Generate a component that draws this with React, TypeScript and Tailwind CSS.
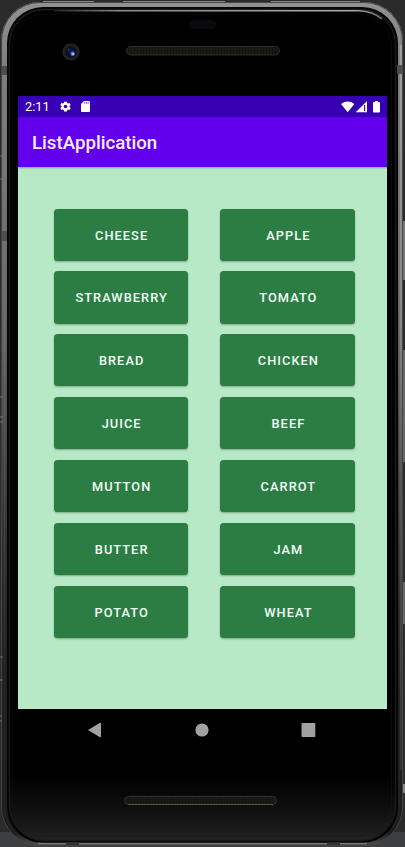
const items = [
  'CHEESE', 'APPLE', 'STRAWBERRY', 'TOMATO', 'BREAD', 'CHICKEN', 'JUICE',
  'BEEF', 'MUTTON', 'CARROT', 'BUTTER', 'JAM', 'POTATO', 'WHEAT',
];

function PhoneFrame() {
  return (
    <svg className="absolute inset-0" width="405" height="847" viewBox="0 0 405 847" aria-hidden="true">
      <defs>
        <linearGradient id="metal" x1="0" y1="0" x2="0" y2="1">
          <stop offset="0" stopColor="#929292" />
          <stop offset="0.08" stopColor="#7c7c7c" />
          <stop offset="0.38" stopColor="#676665" />
          <stop offset="0.5" stopColor="#4c4c4c" />
          <stop offset="0.63" stopColor="#333" />
          <stop offset="0.78" stopColor="#212121" />
          <stop offset="0.985" stopColor="#1d1d1d" />
          <stop offset="1" stopColor="#505050" />
        </linearGradient>
        <linearGradient id="metalRight" x1="0" y1="0" x2="0" y2="1">
          <stop offset="0" stopColor="#a0a0a0" />
          <stop offset="0.4" stopColor="#858585" />
          <stop offset="0.6" stopColor="#555" />
          <stop offset="1" stopColor="#333" />
        </linearGradient>
        <linearGradient id="edge" x1="0" y1="0" x2="0" y2="1">
          <stop offset="0" stopColor="#8a8a8a" stopOpacity=".3" />
          <stop offset="0.5" stopColor="#8a8a8a" stopOpacity=".25" />
          <stop offset="0.8" stopColor="#8a8a8a" stopOpacity=".06" />
          <stop offset="1" stopColor="#8a8a8a" stopOpacity=".06" />
        </linearGradient>
        <linearGradient id="chin" x1="0" y1="0" x2="0" y2="1">
          <stop offset="0" stopColor="#000" />
          <stop offset="0.92" stopColor="#000" />
          <stop offset="0.96" stopColor="#0e0e0e" />
          <stop offset="1" stopColor="#222" />
        </linearGradient>
        <linearGradient id="shine" x1="54" y1="0" x2="382" y2="0" gradientUnits="userSpaceOnUse">
          <stop offset="0" stopColor="#222" />
          <stop offset="0.2" stopColor="#888" />
          <stop offset="0.9" stopColor="#aaa" />
          <stop offset="1" stopColor="#777" />
        </linearGradient>
        <radialGradient id="lens">
          <stop offset="0" stopColor="#10204e" />
          <stop offset="0.55" stopColor="#080d24" />
          <stop offset="0.65" stopColor="#181818" />
          <stop offset="1" stopColor="#292929" />
        </radialGradient>
        <pattern id="mesh" width="3" height="3" patternUnits="userSpaceOnUse">
          <rect width="3" height="3" fill="#14130f" />
          <path d="M1 0v3" stroke="#1f1e19" strokeWidth="1" />
        </pattern>
      </defs>
      <rect width="405" height="832" fill="#2b2b2b" />
      <rect y="832" width="405" height="15" fill="#3c3f41" />
      <rect x="403" y="221" width="2" height="59" fill="#777" />
      <rect x="403" y="350" width="2" height="112" fill="#686868" />
      <rect x="403" y="582" width="2" height="42" fill="#666" />
      <rect x="403" y="784" width="2" height="9" fill="#888" />
      <path d="M43 1.7H94M123 1.7H225M271 1.7H360" stroke="#858585" strokeWidth="1.4" />
      <rect x="1" y="2" width="402" height="844" rx="39" fill="url(#metal)" />
      <rect x="400" y="45" width="2" height="725" fill="url(#metalRight)" />
      <rect x="1.5" y="2.5" width="401" height="843" rx="38.5" fill="none" stroke="#454545" />
      <rect x="4.5" y="5.5" width="395" height="837" rx="35" fill="none" stroke="url(#edge)" />
      <rect x="7" y="7" width="391" height="836" rx="36" fill="#050505" />
      <rect x="9.5" y="9.5" width="386" height="831" rx="35" fill="url(#chin)" stroke="#1c1c1c" strokeWidth="1.3" />
      <rect x="12.5" y="14" width="379" height="822" rx="32" fill="none" stroke="#191919" strokeOpacity=".45" />
      <path d="M54 10.7H359C368 11 376 14 382 19" fill="none" stroke="url(#shine)" strokeWidth="1.5" />
      <path d="M2 66h5v9H2zM397 65h6v9h-6zM2 231h5v10H2z" fill="#4d4d4d" />
      <path d="M0 156h3M0 179h3M0 397h3M0 417h3M0 422h3M0 657h3M0 680h3M0 716h2M0 721h2" stroke="#999" strokeOpacity=".6" />
      <path d="M38 843.5H367" stroke="#777" strokeWidth="1.5" />
      <path d="M66 843.5h13M327 843.5h13" stroke="#303030" strokeWidth="3" />
      <rect x="189" y="20" width="27" height="9" rx="4.5" fill="#080a0e" />
      <rect x="126.5" y="46.5" width="153" height="8.5" rx="4.2" fill="url(#mesh)" stroke="#2d2d2a" />
      <circle cx="71" cy="52" r="8.5" fill="url(#lens)" />
      <circle cx="72.7" cy="53.7" r="2.2" fill="#526fdd" />
      <circle cx="73" cy="54" r="1" fill="#b9cbff" />
      <circle cx="68.5" cy="49.5" r=".9" fill="#33447c" />
      <rect x="124.5" y="796.5" width="152" height="8" rx="4" fill="url(#mesh)" stroke="#303030" />
      <path d="M128 804.5H273" stroke="#565550" />
    </svg>
  );
}

function StatusBar() {
  return (
    <header className="flex h-[21px] items-center bg-[#3700b3] pl-[7px] pr-[7px] text-white">
      <span className="w-[34px] text-[12.8px] leading-[21px]">2:11</span>
      <svg className="h-[13px] w-[13px]" viewBox="0 0 24 24" fill="currentColor">
        <path fillRule="evenodd" d="M19.4 13a7 7 0 0 0 0-2l2.2-1.7-2.2-3.7-2.6 1a8 8 0 0 0-1.7-1L14.7 3H9.3l-.4 2.6a8 8 0 0 0-1.7 1l-2.6-1-2.2 3.7L4.6 11a7 7 0 0 0 0 2l-2.2 1.7 2.2 3.7 2.6-1a8 8 0 0 0 1.7 1l.4 2.6h5.4l.4-2.6a8 8 0 0 0 1.7-1l2.6 1 2.2-3.7zM12 8.7a3.3 3.3 0 1 1 0 6.6 3.3 3.3 0 0 1 0-6.6z" />
      </svg>
      <svg className="ml-[9px] h-[11px] w-[9px]" viewBox="0 0 9 11">
        <path d="M3 0h5q1 0 1 1v9q0 1-1 1H1q-1 0-1-1V3z" fill="currentColor" />
        <path d="M3.7 1v1.7M5.4 1v1.7M7.1 1v1.7" stroke="#3700b3" strokeWidth=".7" />
      </svg>
      <svg className="ml-auto h-[12px] w-[39px]" viewBox="0 0 39 12">
        <path d="M0 2.9Q6.7-2 13.4 2.9L6.7 11.3z" fill="currentColor" />
        <path d="M14.7 11.2 26 0v11.2z" fill="currentColor" />
        <path d="M23.6 4v6.2" stroke="#3700b3" strokeWidth="1.1" />
        <path d="M34 0h3v1h1q1 0 1 1v8.5q0 1-1 1h-5q-1 0-1-1V2q0-1 1-1h1z" fill="currentColor" />
      </svg>
    </header>
  );
}

export default function App() {
  return (
    <div className="relative h-[847px] w-[405px] overflow-hidden font-[Roboto,sans-serif]">
      <PhoneFrame />
      <div className="relative ml-[18px] w-[369px] pt-24">
        <StatusBar />
        <div className="relative flex h-[50px] items-center bg-[#6200ee] pl-[14px] pt-[3px] text-[18.7px] font-medium text-[#f8edff] shadow-[0_1px_2px_rgba(0,0,0,0.3)]">
          ListApplication
        </div>
        <main className="h-[542px] bg-[#b8e9c6] pl-[35.5px] pt-[41.6px]">
          <div className="grid w-[301.5px] grid-cols-2 gap-x-8 gap-y-[10.65px]">
            {items.map((item) => (
              <button
                key={item}
                className="h-[52.2px] rounded-[3.5px] bg-[#2c7d44] pl-[1.5px] pt-[1px] text-[12.8px] font-medium tracking-[1.05px] text-[#f1fff4] shadow-[0_1px_2px_rgba(0,0,0,0.3)]"
              >
                {item}
              </button>
            ))}
          </div>
        </main>
        <nav className="flex h-[42px] items-center justify-between pl-[69px] pr-[71px] text-[#a1a1a1]">
          <svg width="15" height="16" viewBox="0 0 15 16"><path d="M1 8 13 .8q1-.3 1 .6v13.2q0 .9-1 .6z" fill="currentColor" /></svg>
          <svg width="14" height="14" viewBox="0 0 14 14"><circle cx="7" cy="7" r="6.6" fill="currentColor" /></svg>
          <svg width="15" height="14" viewBox="0 0 15 14"><rect x=".5" width="13.8" height="14" rx=".8" fill="currentColor" /></svg>
        </nav>
      </div>
    </div>
  );
}
